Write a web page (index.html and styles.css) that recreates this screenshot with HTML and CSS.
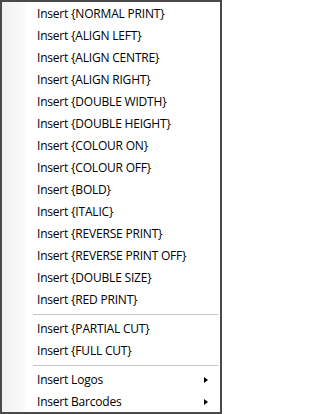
FILE: index.html
```html
<!DOCTYPE html>
<html>
<head>
<meta charset="utf-8">
<link rel="stylesheet" href="styles.css">
</head>
<body>
<div class="menu">
  <div class="item">Insert {NORMAL PRINT}</div>
  <div class="item">Insert {ALIGN LEFT}</div>
  <div class="item">Insert {ALIGN CENTRE}</div>
  <div class="item">Insert {ALIGN RIGHT}</div>
  <div class="item">Insert {DOUBLE WIDTH}</div>
  <div class="item">Insert {DOUBLE HEIGHT}</div>
  <div class="item">Insert {COLOUR ON}</div>
  <div class="item">Insert {COLOUR OFF}</div>
  <div class="item">Insert {BOLD}</div>
  <div class="item">Insert {ITALIC}</div>
  <div class="item">Insert {REVERSE PRINT}</div>
  <div class="item">Insert {REVERSE PRINT OFF}</div>
  <div class="item">Insert {DOUBLE SIZE}</div>
  <div class="item">Insert {RED PRINT}</div>
  <div class="sep"></div>
  <div class="item">Insert {PARTIAL CUT}</div>
  <div class="item">Insert {FULL CUT}</div>
  <div class="sep"></div>
  <div class="item sub">Insert Logos<span class="arrow"></span></div>
  <div class="item sub">Insert Barcodes<span class="arrow"></span></div>
</div>
</body>
</html>
```
FILE: styles.css
```css
html, body {
  margin: 0;
  padding: 0;
  background: #ffffff;
}
.menu {
  box-sizing: border-box;
  width: 222px;
  height: 414px;
  border: 2px solid #4a4a4a;
  padding: 1px 0 1px 0;
  background: linear-gradient(to right, #f1f1f1 0px, #fbfbfb 23px, #ffffff 24px, #ffffff 100%);
  font-family: "Open Sans", "Noto Sans", sans-serif;
  font-size: 12px;
  letter-spacing: -0.2px;
  color: #000000;
}
.item {
  height: 22px;
  line-height: 22px;
  padding-left: 35px;
  padding-right: 12px;
  display: flex;
  align-items: center;
  justify-content: space-between;
  white-space: nowrap;
}
.sep {
  height: 7px;
  margin-left: 31px;
  margin-right: 2px;
  display: flex;
  align-items: center;
}
.sep::before {
  content: "";
  display: block;
  width: 100%;
  height: 1px;
  background: #c6c6c6;
}
.arrow {
  width: 0;
  height: 0;
  border-top: 3.5px solid transparent;
  border-bottom: 3.5px solid transparent;
  border-left: 4px solid #000000;
}
```
